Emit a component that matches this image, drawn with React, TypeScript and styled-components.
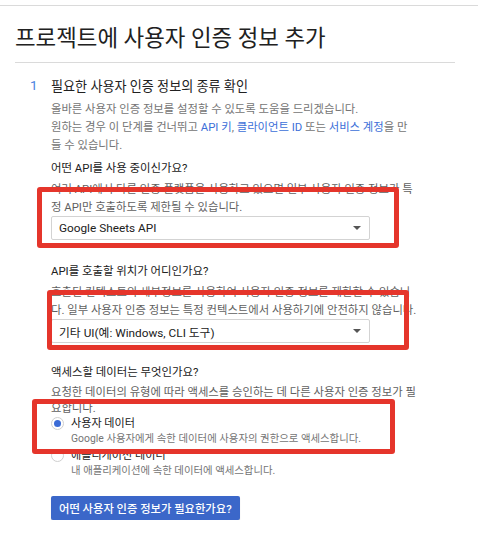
import React from "react";
import styled, { createGlobalStyle } from "styled-components";

const GlobalStyle = createGlobalStyle`
    html, body {
        margin: 0;
        padding: 0;
        background: #ffffff;
    }
    body {
        font-family: Roboto, "Noto Sans CJK KR", "Noto Sans", sans-serif;
        color: #212121;
    }
`;

const StyledPage = styled.div`
    margin-top: 5px;
    border-top: 1px solid #dadada;
    width: 478px;
`;

const StyledTitle = styled.h1`
    margin: 16px 0 0 15px;
    font-size: 22.4px;
    line-height: 32px;
    font-weight: 400;
    color: #212121;
    white-space: nowrap;
`;

const StyledDivider = styled.hr`
    margin: 8px 23px 0 15px;
    border: none;
    border-top: 1px solid #dadada;
`;

const StyledStep = styled.div`
    display: flex;
    align-items: center;
    margin-top: 12px;
    height: 20px;
`;

const StyledStepNumber = styled.span`
    width: 21px;
    padding-left: 30px;
    box-sizing: content-box;
    font-size: 13.5px;
    color: #4a7fe0;
`;

const StyledStepTitle = styled.span`
    font-size: 13.1px;
    color: #212121;
    white-space: nowrap;
`;

const StyledBody = styled.div`
    padding-left: 51px;
    margin-top: 5px;
`;

const StyledText = styled.p<{ $lineHeight?: number; $color?: string }>`
    margin: 0;
    font-size: 11.35px;
    line-height: ${(p) => p.$lineHeight ?? 18}px;
    color: ${(p) => p.$color ?? "#757575"};
    white-space: nowrap;

    & a {
        color: #3c6fd8;
        text-decoration: none;
    }
`;

const StyledField = styled.div<{ $gap: number }>`
    position: relative;
    margin-top: ${(p) => p.$gap}px;
`;

const StyledQuestion = styled.div`
    font-size: 11.4px;
    line-height: 18px;
    color: #212121;
    margin-bottom: 3px;
    white-space: nowrap;
`;

const StyledSelect = styled.div`
    display: flex;
    align-items: center;
    justify-content: space-between;
    box-sizing: border-box;
    width: 319px;
    height: 24px;
    padding: 0 8px 0 7px;
    border: 1px solid #d3d3d3;
    border-radius: 2px;
    background: #ffffff;
    font-size: 11.8px;
    color: #212121;
    white-space: nowrap;
`;

const StyledCaret = styled.span`
    width: 0;
    height: 0;
    border-left: 4px solid transparent;
    border-right: 4px solid transparent;
    border-top: 4px solid #555555;
`;

const StyledRadioRow = styled.div<{ $gap: number }>`
    display: grid;
    grid-template-columns: 20px auto;
    margin-top: ${(p) => p.$gap}px;
`;

const StyledRadio = styled.span<{ $checked?: boolean }>`
    box-sizing: border-box;
    width: 13px;
    height: 13px;
    margin-top: 1px;
    border-radius: 50%;
    border: 1px solid #cfcfcf;
    background: #ffffff;
    display: flex;
    align-items: center;
    justify-content: center;

    &::after {
        content: "";
        width: 7px;
        height: 7px;
        border-radius: 50%;
        background: ${(p) => (p.$checked ? "#3b6bd6" : "transparent")};
    }
`;

const StyledRadioLabel = styled.div`
    font-size: 11.1px;
    line-height: 15px;
    color: #212121;
    white-space: nowrap;
`;

const StyledRadioHint = styled.div`
    font-size: 10.4px;
    line-height: 15px;
    color: #757575;
    white-space: nowrap;
`;

const StyledButton = styled.button`
    display: block;
    margin-top: 18px;
    height: 24px;
    padding: 0 8px;
    border: none;
    border-radius: 2px;
    background: #3b67c9;
    box-shadow: 0 1px 1px rgba(0, 0, 0, 0.2);
    color: #ffffff;
    font-family: inherit;
    font-size: 11.3px;
    font-weight: 500;
    white-space: nowrap;
`;

const StyledMark = styled.div<{ $top: number; $left: number; $width: number; $height: number }>`
    position: absolute;
    top: ${(p) => p.$top}px;
    left: ${(p) => p.$left}px;
    width: ${(p) => p.$width}px;
    height: ${(p) => p.$height}px;
    box-sizing: border-box;
    border: 5px solid #e5352b;
    border-radius: 3px;
    pointer-events: none;
`;

const options = [
    { label: "사용자 데이터", hint: "Google 사용자에게 속한 데이터에 사용자의 권한으로 액세스합니다.", checked: true },
    { label: "애플리케이션 데이터", hint: "내 애플리케이션에 속한 데이터에 액세스합니다.", checked: false },
];

const App = () => {
    return (
        <>
            <GlobalStyle />
            <StyledPage>
                <StyledTitle>프로젝트에 사용자 인증 정보 추가</StyledTitle>
                <StyledDivider />
                <StyledStep>
                    <StyledStepNumber>1</StyledStepNumber>
                    <StyledStepTitle>필요한 사용자 인증 정보의 종류 확인</StyledStepTitle>
                </StyledStep>
                <StyledBody>
                    <StyledText>
                        올바른 사용자 인증 정보를 설정할 수 있도록 도움을 드리겠습니다.
                        <br />
                        원하는 경우 이 단계를 건너뛰고 <a href="#">API 키</a>, <a href="#">클라이언트 ID</a> 또는{" "}
                        <a href="#">서비스 계정</a>을 만
                        <br />들 수 있습니다.
                    </StyledText>

                    <StyledField $gap={5}>
                        <StyledQuestion>어떤 API를 사용 중이신가요?</StyledQuestion>
                        <StyledText $color="#5f5f5f">
                            여러 API에서 다른 인증 플랫폼을 사용하고 있으면 일부 사용자 인증 정보가 특
                            <br />정 API만 호출하도록 제한될 수 있습니다.
                        </StyledText>
                        <StyledSelect>
                            Google Sheets API
                            <StyledCaret />
                        </StyledSelect>
                        <StyledMark $top={28} $left={-14} $width={362} $height={61} />
                    </StyledField>

                    <StyledField $gap={22}>
                        <StyledQuestion>API를 호출할 위치가 어디인가요?</StyledQuestion>
                        <StyledText $color="#5f5f5f">
                            호출된 컨텍스트의 세부정보를 사용하여 사용자 인증 정보를 제한할 수 있습니
                            <br />다. 일부 사용자 인증 정보는 특정 컨텍스트에서 사용하기에 안전하지 않습니다.
                        </StyledText>
                        <StyledSelect>
                            기타 UI(예: Windows, CLI 도구)
                            <StyledCaret />
                        </StyledSelect>
                        <StyledMark $top={28} $left={-4} $width={362} $height={60} />
                    </StyledField>

                    <StyledField $gap={20}>
                        <StyledQuestion>액세스할 데이터는 무엇인가요?</StyledQuestion>
                        <StyledText $color="#5f5f5f" $lineHeight={16}>
                            요청한 데이터의 유형에 따라 액세스를 승인하는 데 다른 사용자 인증 정보가 필
                            <br />요합니다.
                        </StyledText>
                        {options.map((option, index) => (
                            <StyledRadioRow key={option.label} $gap={index === 0 ? 0 : 2}>
                                <StyledRadio $checked={option.checked} />
                                <StyledRadioLabel>{option.label}</StyledRadioLabel>
                                <span />
                                <StyledRadioHint>{option.hint}</StyledRadioHint>
                            </StyledRadioRow>
                        ))}
                        <StyledMark $top={36} $left={-19} $width={363} $height={55} />
                    </StyledField>

                    <StyledButton>어떤 사용자 인증 정보가 필요한가요?</StyledButton>
                </StyledBody>
            </StyledPage>
        </>
    );
};

export default App;
